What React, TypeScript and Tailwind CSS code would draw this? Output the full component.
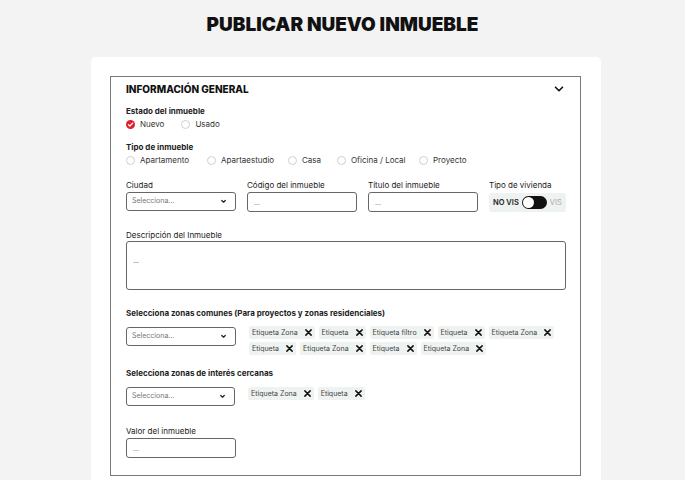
import React from "react";

const font = { fontFamily: "Inter, 'Noto Sans', sans-serif" };

function Radio({ checked, label }: { checked?: boolean; label: string }) {
  return (
    <div className="flex items-center gap-[5px]">
      {checked ? (
        <svg width="9" height="9" viewBox="0 0 10 10">
          <circle cx="5" cy="5" r="5" fill="#e0202c" />
          <path d="M2.7 5.1 L4.3 6.7 L7.4 3.4" stroke="#fff" strokeWidth="1.4" fill="none" strokeLinecap="round" strokeLinejoin="round" />
        </svg>
      ) : (
        <span className="w-[9px] h-[9px] rounded-full border border-[#cfcfcf] bg-white" />
      )}
      <span className="text-[8px] leading-[10px] text-[#333]">{label}</span>
    </div>
  );
}

function Chevron() {
  return (
    <svg width="7" height="7" viewBox="0 0 10 10">
      <path d="M2.5 3.5 L5 6 L7.5 3.5" stroke="#222" strokeWidth="1.8" fill="none" strokeLinecap="round" strokeLinejoin="round" />
    </svg>
  );
}

function Select() {
  return (
    <div className="w-[110px] h-[19px] border border-[#666] rounded-[3px] flex items-center justify-between pl-[5px] pr-[8px] bg-white">
      <span className="text-[7px] text-[#777]">Selecciona...</span>
      <Chevron />
    </div>
  );
}

function Input({ w = "w-[110px]" }: { w?: string }) {
  return (
    <div className={`${w} h-[20px] border border-[#666] rounded-[3px] flex items-center pl-[6px] bg-white`}>
      <span className="text-[7px] text-[#777] leading-none">...</span>
    </div>
  );
}

function Tag({ label }: { label: string }) {
  return (
    <div className="h-[13px] bg-[#eef2f1] rounded-[2px] flex items-center gap-[7px] pl-[3px] pr-[3px]">
      <span className="text-[7px] text-[#444] leading-none">{label}</span>
      <svg width="7" height="7" viewBox="0 0 8 8">
        <path d="M1 1 L7 7 M7 1 L1 7" stroke="#111" strokeWidth="1.7" strokeLinecap="round" />
      </svg>
    </div>
  );
}

function Label({ children, bold }: { children: React.ReactNode; bold?: boolean }) {
  return (
    <div className={`text-[8px] leading-[10px] text-[#222] whitespace-nowrap ${bold ? "font-bold" : ""}`}>{children}</div>
  );
}

export default function App() {
  return (
    <div className="min-h-[480px] bg-[#f3f3f3] overflow-hidden" style={font}>
      <h1 className="text-center text-[19px] leading-[30px] font-black text-[#111] pt-[10px]">
        PUBLICAR NUEVO INMUEBLE
      </h1>
      <div className="ml-[91px] w-[510px] mt-[17px] bg-white rounded-[5px] pt-[19px] pl-[19px] pr-[20px] pb-[20px]">
        <div className="border border-[#7a7a7a] pl-[15px] pr-[15px] pt-[5px] pb-[17px]">
          <div className="flex items-center justify-between h-[14px]">
            <span className="text-[10px] font-extrabold text-[#111]">INFORMACIÓN GENERAL</span>
            <span className="mr-[1px]">
              <svg width="10" height="10" viewBox="0 0 10 10">
                <path d="M1.5 3.2 L5 6.7 L8.5 3.2" stroke="#111" strokeWidth="1.6" fill="none" strokeLinecap="round" strokeLinejoin="round" />
              </svg>
            </span>
          </div>

          <div className="mt-[10px]">
            <Label bold>Estado del inmueble</Label>
            <div className="flex gap-[17px] mt-[3px]">
              <Radio checked label="Nuevo" />
              <Radio label="Usado" />
            </div>
          </div>

          <div className="mt-[13px]">
            <Label bold>Tipo de inmueble</Label>
            <div className="flex mt-[3px]">
              <div className="w-[81px]"><Radio label="Apartamento" /></div>
              <div className="w-[81px]"><Radio label="Apartaestudio" /></div>
              <div className="w-[49px]"><Radio label="Casa" /></div>
              <div className="w-[82px]"><Radio label="Oficina / Local" /></div>
              <div><Radio label="Proyecto" /></div>
            </div>
          </div>

          <div className="grid grid-cols-[110px_110px_110px_77px] gap-x-[11px] mt-[15px]">
            <Label>Ciudad</Label>
            <Label>Código del inmueble</Label>
            <Label>Título del inmueble</Label>
            <Label>Tipo de vivienda</Label>
            <div className="mt-[2px]"><Select /></div>
            <div className="mt-[2px]"><Input /></div>
            <div className="mt-[2px]"><Input /></div>
            <div className="mt-[3px] h-[19px] bg-[#eef2f1] rounded-[3px] flex items-center pl-[4px] gap-[3px] whitespace-nowrap">
              <span className="text-[7.5px] font-semibold text-[#222]">NO VIS</span>
              <div className="w-[25px] h-[13px] rounded-full bg-[#111] flex items-center pl-[1px] shrink-0">
                <div className="w-[11px] h-[11px] rounded-full bg-white" />
              </div>
              <span className="text-[7.5px] text-[#aaa]">VIS</span>
            </div>
          </div>

          <div className="mt-[18px]">
            <Label>Descripción del Inmueble</Label>
            <div className="mt-[1px] w-[440px] h-[49px] border border-[#666] rounded-[3px] pl-[6px] pt-[3px]">
              <span className="text-[7px] text-[#555]">...</span>
            </div>
          </div>

          <div className="mt-[18px]">
            <Label bold>Selecciona zonas comunes (Para proyectos y zonas residenciales)</Label>
            <div className="flex mt-[8px] gap-[13px]">
              <div className="mt-[1px]"><Select /></div>
              <div className="flex flex-wrap gap-x-[4px] gap-y-[3px] w-[320px]">
                <Tag label="Etiqueta Zona" />
                <Tag label="Etiqueta" />
                <Tag label="Etiqueta filtro" />
                <Tag label="Etiqueta" />
                <Tag label="Etiqueta Zona" />
                <Tag label="Etiqueta" />
                <Tag label="Etiqueta Zona" />
                <Tag label="Etiqueta" />
                <Tag label="Etiqueta Zona" />
              </div>
            </div>
          </div>

          <div className="mt-[13px]">
            <Label bold>Selecciona zonas de interés cercanas</Label>
            <div className="flex mt-[9px] gap-[13px]">
              <Select />
              <div className="flex flex-wrap gap-x-[4px] gap-y-[3px] w-[320px]">
                <Tag label="Etiqueta Zona" />
                <Tag label="Etiqueta" />
              </div>
            </div>
          </div>

          <div className="mt-[20px]">
            <Label>Valor del inmueble</Label>
            <div className="mt-[2px]"><Input /></div>
          </div>
        </div>
      </div>
    </div>
  );
}
